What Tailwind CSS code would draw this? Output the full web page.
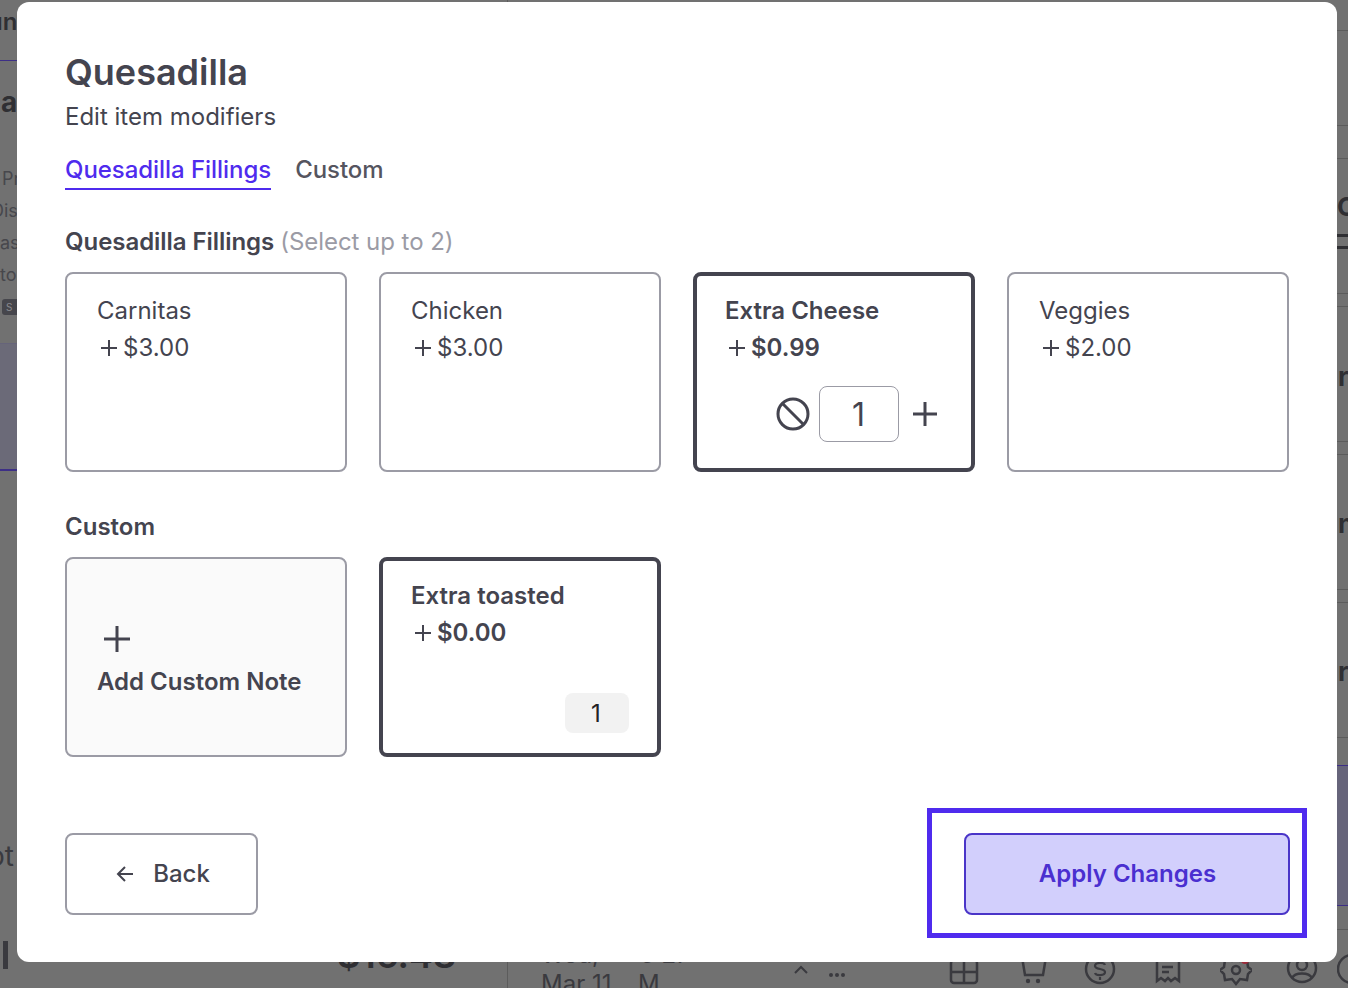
<!DOCTYPE html>
<html lang="en">
<head>
    <meta charset="UTF-8">
    <meta name="viewport" content="width=device-width, initial-scale=1.0">
    <title>Quesadilla - Edit item modifiers</title>
    <script src="https://cdn.jsdelivr.net/npm/@tailwindcss/browser@4"></script>
</head>
<body class="bg-[#717171] font-['Inter',sans-serif] text-[#44444f]">
    <div class="relative w-[1348px] h-[988px] overflow-hidden">
        <!-- Dimmed page behind the modal -->
        <div class="absolute inset-0 text-[#2f2f33]">
            <div class="absolute left-0 top-[343px] w-[17px] h-[128px] bg-[#6b6a78] border-t border-[#66647a] border-b-2 border-b-[#3d2f86]"></div>
            <div class="absolute left-0 top-[60px] w-[17px] h-px bg-[#3d2f86]"></div>
            <span class="absolute left-[-12px] top-[6px] text-[24px] leading-8 font-semibold">un</span>
            <span class="absolute left-[1px] top-[86px] text-[28px] leading-8 font-bold">a</span>
            <span class="absolute left-[2px] top-[167px] text-[18px] leading-6 text-[#47474c]">Pr</span>
            <span class="absolute left-[-9px] top-[199px] text-[18px] leading-6 text-[#47474c]">Dis</span>
            <span class="absolute left-0 top-[231px] text-[18px] leading-6 text-[#47474c]">as</span>
            <span class="absolute left-0 top-[263px] text-[18px] leading-6 text-[#47474c]">to</span>
            <span class="absolute left-[2px] top-[299px] w-[20px] h-[16px] rounded-[3px] bg-[#46464c] text-[10px] leading-4 pl-1 text-[#8a8a8f]">S</span>
            <span class="absolute left-[-12px] top-[838px] text-[28px] leading-9 text-[#3a3a3f]">ot</span>
            <div class="absolute left-[3px] top-[941px] w-[5px] h-[28px] bg-[#3a3a3f]"></div>
            <span class="absolute left-[337px] top-[935px] text-[36px] leading-10 font-semibold">$16.48</span>
            <div class="absolute left-[507px] top-0 w-px h-[988px] bg-[#5c5c5c]"></div>
            <span class="absolute left-[541px] top-[943px] text-[24px] leading-6 text-[#3a3a3f]">Wed,</span>
            <span class="absolute left-[640px] top-[943px] text-[24px] leading-6 text-[#3a3a3f]">5:27</span>
            <span class="absolute left-[541px] top-[972px] text-[24px] leading-6 text-[#3a3a3f]">Mar 11</span>
            <span class="absolute left-[638px] top-[972px] text-[24px] leading-6 text-[#3a3a3f]">M</span>
            <svg class="absolute left-[794px] top-[965px]" width="14" height="9" viewBox="0 0 14 9" fill="none" stroke="#3a3a3f" stroke-width="2"><path d="M1 8l6-6 6 6"/></svg>
            <svg class="absolute left-[828px] top-[973px]" width="18" height="4" viewBox="0 0 18 4" fill="#3a3a3f"><circle cx="3" cy="2" r="2"/><circle cx="9" cy="2" r="2"/><circle cx="15" cy="2" r="2"/></svg>
            <!-- Right column fragments -->
            <div class="absolute left-[1337px] top-[30px] w-[11px] h-px bg-[#5c5c5c]"></div>
            <div class="absolute left-[1337px] top-[125px] w-[11px] h-px bg-[#5c5c5c]"></div>
            <div class="absolute left-[1337px] top-[158px] w-[11px] h-px bg-[#5c5c5c]"></div>
            <div class="absolute left-[1337px] top-[293px] w-[11px] h-px bg-[#5c5c5c]"></div>
            <div class="absolute left-[1337px] top-[306px] w-[11px] h-px bg-[#5c5c5c]"></div>
            <div class="absolute left-[1337px] top-[441px] w-[11px] h-px bg-[#5c5c5c]"></div>
            <div class="absolute left-[1337px] top-[454px] w-[11px] h-px bg-[#5c5c5c]"></div>
            <div class="absolute left-[1337px] top-[589px] w-[11px] h-px bg-[#5c5c5c]"></div>
            <div class="absolute left-[1337px] top-[602px] w-[11px] h-px bg-[#5c5c5c]"></div>
            <div class="absolute left-[1337px] top-[737px] w-[11px] h-px bg-[#5c5c5c]"></div>
            <span class="absolute left-[1337px] top-[191px] text-[26px] leading-8 font-bold">C</span>
            <div class="absolute left-[1337px] top-[234px] w-[11px] h-[3px] bg-[#2f2f33]"></div>
            <div class="absolute left-[1337px] top-[246px] w-[11px] h-[3px] bg-[#2f2f33]"></div>
            <span class="absolute left-[1338px] top-[361px] text-[26px] leading-8 font-bold">r</span>
            <span class="absolute left-[1338px] top-[508px] text-[26px] leading-8 font-bold">n</span>
            <span class="absolute left-[1338px] top-[656px] text-[26px] leading-8 font-bold">r</span>
            <div class="absolute left-[1337px] top-[765px] w-[11px] h-[141px] bg-[#66647a] border-t border-[#3d2f86] border-b border-b-[#3d2f86]"></div>
            <div class="absolute left-[1337px] top-[929px] w-[11px] h-px bg-[#5c5c5c]"></div>
            <!-- Bottom nav icons -->
            <svg class="absolute left-[949px] top-[959px]" width="30" height="26" viewBox="0 0 30 26" fill="none" stroke="#3a3a3f" stroke-width="2.5"><rect x="2" y="1" width="26" height="23" rx="3"/><path d="M2 13h26M15 1v23"/></svg>
            <svg class="absolute left-[1018px] top-[955px]" width="30" height="30" viewBox="0 0 30 30" fill="none" stroke="#3a3a3f" stroke-width="2.5"><path d="M4 2h24l-3 18H7z"/><circle cx="10" cy="26" r="2.2" fill="#3a3a3f" stroke="none"/><circle cx="20" cy="26" r="2.2" fill="#3a3a3f" stroke="none"/></svg>
            <svg class="absolute left-[1084px] top-[954px]" width="32" height="32" viewBox="0 0 32 32" fill="none" stroke="#3a3a3f" stroke-width="2.5"><circle cx="16" cy="15" r="14"/><path d="M21 11c-1-3-10-3-10 1s10 2 10 6-9 4-10 1M16 23v3" stroke-width="2.2"/></svg>
            <svg class="absolute left-[1155px] top-[955px]" width="26" height="30" viewBox="0 0 26 30" fill="none" stroke="#3a3a3f" stroke-width="2.5"><path d="M2 0v26l4-3 4 3 3-3 3 3 4-3 4 3V0"/><path d="M7 12h11M7 17h7"/></svg>
            <svg class="absolute left-[1220px] top-[954px]" width="32" height="32" viewBox="0 0 32 32" fill="none" stroke="#3a3a3f" stroke-width="2.5"><path d="M16 2l4 5 7-1 1 7 4 3-4 4-1 6-7-1-4 5-4-5-7 1-1-6-4-4 4-3 1-7 7 1z"/><circle cx="16" cy="16" r="4"/></svg>
            <div class="absolute left-[1241px] top-[956px] w-[8px] h-[8px] rounded-full bg-[#9c2b3a]"></div>
            <svg class="absolute left-[1286px] top-[953px]" width="32" height="32" viewBox="0 0 32 32" fill="none" stroke="#3a3a3f" stroke-width="2.5"><circle cx="16" cy="15" r="14"/><circle cx="16" cy="12" r="5"/><path d="M6 25c3-6 17-6 20 0"/></svg>
            <svg class="absolute left-[1337px] top-[954px]" width="11" height="32" viewBox="0 0 11 32" fill="none" stroke="#3a3a3f" stroke-width="2.5"><circle cx="15" cy="15" r="14"/></svg>
        </div>

        <!-- Modal -->
        <div class="absolute left-[17px] top-[2px] w-[1320px] h-[960px] bg-white rounded-[12px] px-12 pt-12 pb-[47px] flex flex-col">
            <h1 class="text-[36px] leading-[44px] font-semibold">Quesadilla</h1>
            <p class="text-[24px] leading-8 mt-[7px]">Edit item modifiers</p>

            <div class="flex gap-[24px] mt-[21px] text-[24px] leading-8 tracking-[-0.05px]">
                <div class="text-[#4f2bee] font-medium border-b-2 border-[#4f2bee] pb-[2px]">Quesadilla Fillings</div>
                <div class="font-medium text-[#55555f]">Custom</div>
            </div>

            <h2 class="text-[24px] leading-8 font-semibold mt-[36px] tracking-[-0.05px]">Quesadilla Fillings <span class="font-normal text-[#9b9ba5]">(Select up to 2)</span></h2>
            <div class="flex gap-8 mt-[14px]">
                <div class="w-[282px] h-[200px] border-2 border-[#9b9ba5] rounded-[8px] px-[30px] py-[18px] text-[24px] leading-[37px]">
                    <div>Carnitas</div>
                    <div class="flex items-center gap-1"><svg class="ml-[2px]" width="20" height="20" viewBox="0 0 20 20" fill="none" stroke="#44444f" stroke-width="2"><path d="M10 2v16M2 10h16"/></svg>$3.00</div>
                </div>
                <div class="w-[282px] h-[200px] border-2 border-[#9b9ba5] rounded-[8px] px-[30px] py-[18px] text-[24px] leading-[37px]">
                    <div>Chicken</div>
                    <div class="flex items-center gap-1"><svg class="ml-[2px]" width="20" height="20" viewBox="0 0 20 20" fill="none" stroke="#44444f" stroke-width="2"><path d="M10 2v16M2 10h16"/></svg>$3.00</div>
                </div>
                <div class="w-[282px] h-[200px] border-4 border-[#44444f] rounded-[8px] px-[28px] py-[16px] text-[24px] leading-[37px] font-semibold flex flex-col">
                    <div>Extra Cheese</div>
                    <div class="flex items-center gap-1"><svg class="ml-[2px]" width="20" height="20" viewBox="0 0 20 20" fill="none" stroke="#44444f" stroke-width="2"><path d="M10 2v16M2 10h16"/></svg>$0.99</div>
                    <div class="flex items-center justify-end mt-[20px] pr-[5px] font-normal">
                        <svg width="34" height="34" viewBox="0 0 34 34" fill="none" stroke="#44444f" stroke-width="3"><circle cx="17" cy="17" r="15"/><path d="M6.5 6.5l21 21"/></svg>
                        <div class="w-[80px] h-[56px] ml-[9px] border border-[#9b9ba5] rounded-[8px] flex items-center justify-center text-[32px] pr-[1px]">1</div>
                        <svg class="ml-[13px]" width="26" height="26" viewBox="0 0 26 26" fill="none" stroke="#44444f" stroke-width="3"><path d="M13 1v24M1 13h24"/></svg>
                    </div>
                </div>
                <div class="w-[282px] h-[200px] border-2 border-[#9b9ba5] rounded-[8px] px-[30px] py-[18px] text-[24px] leading-[37px]">
                    <div>Veggies</div>
                    <div class="flex items-center gap-1"><svg class="ml-[2px]" width="20" height="20" viewBox="0 0 20 20" fill="none" stroke="#44444f" stroke-width="2"><path d="M10 2v16M2 10h16"/></svg>$2.00</div>
                </div>
            </div>

            <h2 class="text-[24px] leading-8 font-semibold mt-[39px]">Custom</h2>
            <div class="flex gap-8 mt-[14px]">
                <div class="w-[282px] h-[200px] border-2 border-[#9b9ba5] rounded-[8px] bg-[#fafafa] px-[30px] pt-[8px] flex flex-col justify-center text-[24px] font-semibold">
                    <svg class="ml-[4px]" width="32" height="32" viewBox="0 0 32 32" fill="none" stroke="#44444f" stroke-width="3"><path d="M16 3v26M3 16h26"/></svg>
                    <div class="leading-[37px] mt-[8px]">Add Custom Note</div>
                </div>
                <div class="w-[282px] h-[200px] border-4 border-[#44444f] rounded-[8px] px-[28px] py-[16px] text-[24px] leading-[37px] font-semibold flex flex-col">
                    <div>Extra toasted</div>
                    <div class="flex items-center gap-1"><svg class="ml-[2px]" width="20" height="20" viewBox="0 0 20 20" fill="none" stroke="#44444f" stroke-width="2"><path d="M10 2v16M2 10h16"/></svg>$0.00</div>
                    <div class="flex justify-end mt-auto pb-[4px] font-normal">
                        <div class="w-[64px] h-[40px] bg-[#f2f2f2] rounded-[8px] flex items-center justify-center text-[#222226] text-[24px] pr-[2px]">1</div>
                    </div>
                </div>
            </div>

            <div class="flex justify-between items-center mt-auto">
                <button class="w-[193px] h-[82px] border-2 border-[#9b9ba5] rounded-[8px] flex items-center justify-center gap-[19px] pl-[3px] text-[24px] font-medium">
                    <svg width="18" height="18" viewBox="0 0 18 18" fill="none" stroke="#44444f" stroke-width="2"><path d="M17 9H2M9 2L2 9l7 7"/></svg>
                    Back
                </button>
                <button class="relative w-[326px] h-[82px] bg-[#d2cffc] border-2 border-[#4a35c8] rounded-[8px] text-[#4a2fd0] text-[24px] font-semibold pl-[1px] mr-[-1px]">
                    Apply Changes
                    <span class="absolute left-[-39px] right-[-19px] top-[-27px] bottom-[-25px] border-[5px] border-[#4f2bee]"></span>
                </button>
            </div>
        </div>
    </div>
</body>
</html>
